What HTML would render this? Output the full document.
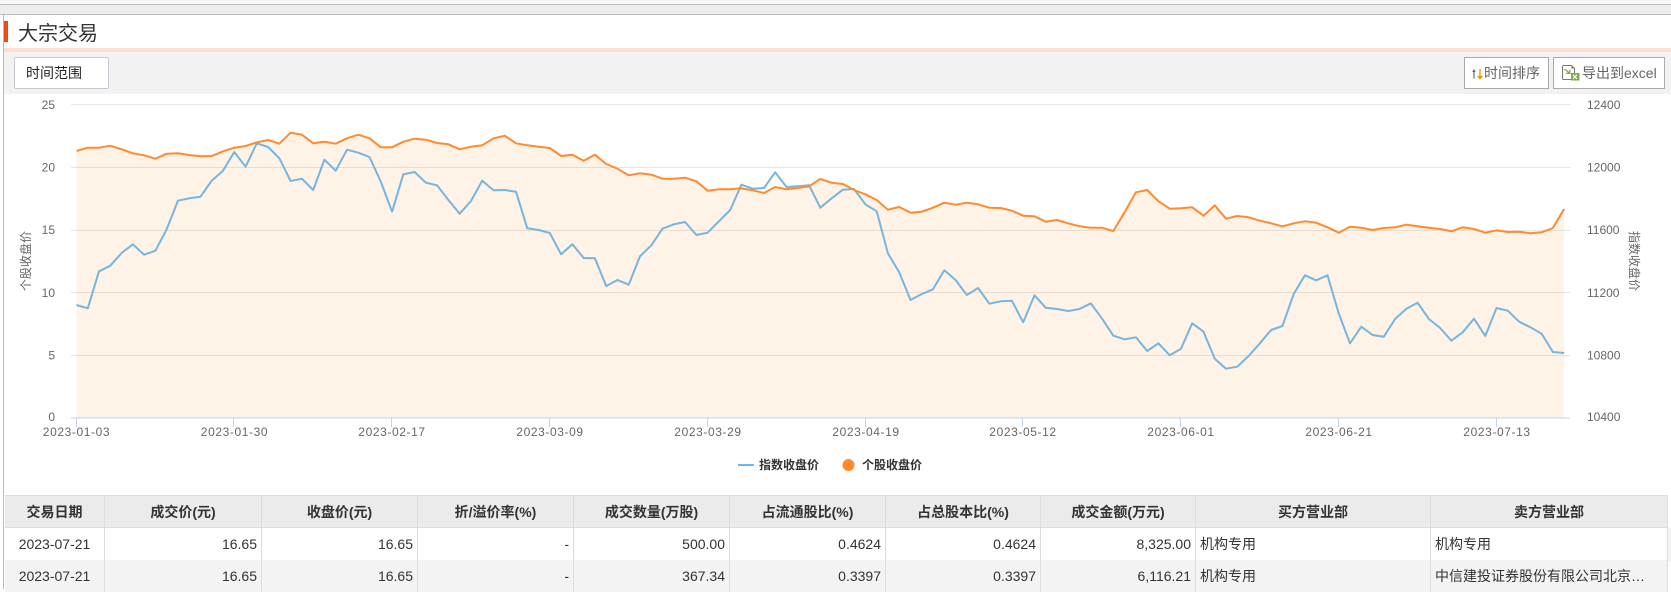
<!DOCTYPE html>
<html lang="zh">
<head>
<meta charset="utf-8">
<title>大宗交易</title>
<style>
*{box-sizing:border-box}
html,body{margin:0;padding:0;background:#fff}
body{position:relative;width:1671px;height:589px;overflow:hidden;font-family:"Liberation Sans","Noto Sans CJK SC",sans-serif;font-size:14px;color:#333}
.a{position:absolute}
.btn{position:absolute;top:57px;height:32px;background:#fff;border:1px solid #aaa;color:#666;line-height:30px;font-size:14px;white-space:nowrap}
table{position:absolute;left:5px;top:495px;border-collapse:separate;border-spacing:0;table-layout:fixed;width:1663px}
th,td{border-right:1px solid #ddd;padding:0 4px;font-size:14px;white-space:nowrap;overflow:hidden}
th{height:33px;background:#ebebeb;border-top:1px solid #ddd;border-bottom:1px solid #ddd;color:#333;font-weight:bold;text-align:center}
td{height:32px;color:#333;text-align:right}
td.c{text-align:center}
td.l{text-align:left}
tr.z td{background:#f3f3f3}
</style>
</head>
<body>
<div class="a" style="left:0;top:0;width:1671px;height:4px;background:#f6f6f6"></div>
<div class="a" style="left:0;top:4px;width:1671px;height:11px;background:#eceeee;border-top:1px solid #bbb;border-bottom:1px solid #bbb"></div>
<div class="a" style="left:3px;top:14px;width:1px;height:575px;background:#bbb"></div>
<div class="a" style="left:4px;top:21px;width:4px;height:21px;background:#f04a0f"></div>
<div class="a" style="left:18px;top:17px;font-size:20px;line-height:30px;color:#333;font-family:'Noto Sans CJK SC',sans-serif">大宗交易</div>
<div class="a" style="left:4px;top:48px;width:1667px;height:4px;background:#fde0cf"></div>
<div class="a" style="left:4px;top:52px;width:1667px;height:42px;background:#f2f2f2"></div>
<div class="a" style="left:14px;top:57px;width:95px;height:32px;background:#fff;border:1px solid #c5c8d0;border-radius:2px;color:#222;line-height:30px;padding-left:11px">时间范围</div>
<div class="btn" style="left:1464px;width:85px;padding-left:19px">时间排序
<svg class="a" style="left:7px;top:10px" width="12" height="12" viewBox="0 0 12 12"><path d="M2 10.500V3" fill="none" stroke="#666" stroke-width="1.200"/><path d="M2 1L.2 4h3.600z" fill="#666"/><path d="M8 1v8" fill="none" stroke="#f28a00" stroke-width="1.300"/><path d="M8 11.500L5 8h6z" fill="#f28a00"/></svg>
</div>
<div class="btn" style="left:1553px;width:112px;padding-left:28px">导出到excel
<svg class="a" style="left:8px;top:7px" width="18" height="16" viewBox="0 0 18 16"><path d="M9.500.5H1.500a1 1 0 0 0-1 1v12a1 1 0 0 0 1 1h8M9.500.5l3 3V8" fill="none" stroke="#777" stroke-width="1"/><path d="M9.500.5v3h3z" fill="#777"/><path d="M2.500 4l5 4M7.800 4.800v3.500H4.300" fill="none" stroke="#7cad4a" stroke-width="1.300"/><rect x="9" y="8" width="8.500" height="7.500" fill="#7cad4a"/><path d="M11 9.800l4 4M15 9.800l-4 4" stroke="#fff" stroke-width="1.200"/></svg>
</div>

<svg class="a" style="left:0;top:94px;font-family:'Liberation Sans','Noto Sans CJK SC',sans-serif" width="1671" height="400" viewBox="0 94 1671 400">
<g stroke="#e6e6e6" stroke-width="1">
<path d="M71 104.500H1570M71 167.500H1570M71 230.500H1570M71 292.500H1570M71 355.500H1570"/>
</g>
<polygon fill="#ff8b2e" fill-opacity=".115" points="76.5,418 76.5,151 87.8,147.7 99,147.7 110.3,145.7 121.6,149.3 132.9,153.3 144.1,155.3 155.4,158.7 166.7,153.7 177.9,153.3 189.2,155 200.5,156.3 211.7,156 223,151.3 234.3,147.7 245.6,146 256.8,142.3 268.1,140 279.4,143.7 290.6,132.7 301.9,134.7 313.2,143.3 324.4,141.7 335.7,143.7 347,138.3 358.3,134.7 369.5,138.3 380.8,147.3 392.1,147.3 403.3,141.7 414.6,138.7 425.9,139.7 437.1,143 448.4,144.3 459.7,149.3 471,146.7 482.2,145.3 493.5,138.3 504.8,135.7 516,143.3 527.3,145.3 538.6,146.7 549.8,148 561.1,156 572.4,154.7 583.7,160.7 594.9,154.7 606.2,164 617.5,168.7 628.7,175.3 640,173.3 651.3,174.7 662.5,178.7 673.8,178.7 685.1,177.7 696.4,181.3 707.6,190.7 718.9,189.3 730.2,189.3 741.4,188.3 752.7,190.3 764,193 775.2,187 786.5,189.3 797.8,188 809.1,186.3 820.3,179 831.6,182.7 842.9,184 854.1,190 865.4,194.3 876.7,200 887.9,209.7 899.2,207 910.5,212.7 921.8,211.7 933,207.7 944.3,202.7 955.6,204.7 966.8,202.7 978.1,204.3 989.4,207.7 1000.6,208 1011.9,210.7 1023.2,215.7 1034.5,216.3 1045.7,221.7 1057,220 1068.3,223.3 1079.5,226.3 1090.8,227.7 1102.1,227.7 1113.3,231 1124.6,212.3 1135.9,192.3 1147.2,190 1158.4,201.3 1169.7,208.7 1181,208.3 1192.2,207.3 1203.5,215.7 1214.8,205.3 1226,218.7 1237.3,216 1248.6,217.3 1259.9,220.7 1271.1,223.3 1282.4,226.3 1293.7,223.3 1304.9,221.3 1316.2,222.7 1327.5,227.3 1338.7,232.7 1350,226.7 1361.3,227.7 1372.6,230 1383.8,228 1395.1,227.3 1406.4,224.7 1417.6,226.3 1428.9,227.7 1440.2,229 1451.4,231.3 1462.7,227.3 1474,229 1485.3,232.7 1496.5,230.3 1507.8,232 1519.1,231.7 1530.3,233.3 1541.6,232.3 1552.9,228 1564.1,209 1564.1,418"/>
<polyline fill="none" stroke="#77b5dd" stroke-width="2" stroke-linejoin="round" points="76.5,305 87.8,308.3 99,271.3 110.3,265.7 121.6,253 132.9,244.3 144.1,254.7 155.4,250.7 166.7,229.3 177.9,200.7 189.2,198.3 200.5,196.7 211.7,180.7 223,170.7 234.3,152 245.6,166.7 256.8,143.3 268.1,147 279.4,158.3 290.6,181 301.9,178.7 313.2,190 324.4,159.7 335.7,170.7 347,149.7 358.3,152.7 369.5,157 380.8,181.7 392.1,211.7 403.3,174.3 414.6,172 425.9,182.7 437.1,185.3 448.4,200 459.7,213.7 471,201 482.2,180.7 493.5,190.3 504.8,190 516,191.7 527.3,228.3 538.6,230 549.8,233 561.1,254.3 572.4,244.3 583.7,258 594.9,258.3 606.2,286 617.5,280 628.7,284.7 640,256.3 651.3,245.3 662.5,228.7 673.8,224.3 685.1,222 696.4,235 707.6,232.7 718.9,221.3 730.2,210 741.4,184.7 752.7,188.7 764,188 775.2,172.3 786.5,187 797.8,186.3 809.1,185.3 820.3,207.7 831.6,198.3 842.9,189.7 854.1,189 865.4,204.3 876.7,211.3 887.9,253.3 899.2,272.3 910.5,300 921.8,294 933,289.3 944.3,270.3 955.6,280 966.8,295 978.1,288 989.4,303.7 1000.6,301.3 1011.9,300.7 1023.2,322.3 1034.5,295.3 1045.7,307.7 1057,309 1068.3,311 1079.5,309 1090.8,303.3 1102.1,318.7 1113.3,335.7 1124.6,339.3 1135.9,337.3 1147.2,351 1158.4,343.3 1169.7,355.3 1181,348.7 1192.2,323.3 1203.5,331.7 1214.8,358.7 1226,368.7 1237.3,366.7 1248.6,356 1259.9,343.3 1271.1,330 1282.4,326 1293.7,294 1304.9,275.3 1316.2,280.3 1327.5,275.3 1338.7,313.3 1350,343.3 1361.3,326.7 1372.6,335 1383.8,336.7 1395.1,319 1406.4,308.7 1417.6,302.7 1428.9,319 1440.2,328 1451.4,340.7 1462.7,332.3 1474,318.7 1485.3,336 1496.5,308 1507.8,310.7 1519.1,321.7 1530.3,327.3 1541.6,333.7 1552.9,352 1564.1,353"/>
<polyline fill="none" stroke="#ff8b2e" stroke-width="2" stroke-linejoin="round" points="76.5,151 87.8,147.7 99,147.7 110.3,145.7 121.6,149.3 132.9,153.3 144.1,155.3 155.4,158.7 166.7,153.7 177.9,153.3 189.2,155 200.5,156.3 211.7,156 223,151.3 234.3,147.7 245.6,146 256.8,142.3 268.1,140 279.4,143.7 290.6,132.7 301.9,134.7 313.2,143.3 324.4,141.7 335.7,143.7 347,138.3 358.3,134.7 369.5,138.3 380.8,147.3 392.1,147.3 403.3,141.7 414.6,138.7 425.9,139.7 437.1,143 448.4,144.3 459.7,149.3 471,146.7 482.2,145.3 493.5,138.3 504.8,135.7 516,143.3 527.3,145.3 538.6,146.7 549.8,148 561.1,156 572.4,154.7 583.7,160.7 594.9,154.7 606.2,164 617.5,168.7 628.7,175.3 640,173.3 651.3,174.7 662.5,178.7 673.8,178.7 685.1,177.7 696.4,181.3 707.6,190.7 718.9,189.3 730.2,189.3 741.4,188.3 752.7,190.3 764,193 775.2,187 786.5,189.3 797.8,188 809.1,186.3 820.3,179 831.6,182.7 842.9,184 854.1,190 865.4,194.3 876.7,200 887.9,209.7 899.2,207 910.5,212.7 921.8,211.7 933,207.7 944.3,202.7 955.6,204.7 966.8,202.7 978.1,204.3 989.4,207.7 1000.6,208 1011.9,210.7 1023.2,215.7 1034.5,216.3 1045.7,221.7 1057,220 1068.3,223.3 1079.5,226.3 1090.8,227.7 1102.1,227.7 1113.3,231 1124.6,212.3 1135.9,192.3 1147.2,190 1158.4,201.3 1169.7,208.7 1181,208.3 1192.2,207.3 1203.5,215.7 1214.8,205.3 1226,218.7 1237.3,216 1248.6,217.3 1259.9,220.7 1271.1,223.3 1282.4,226.3 1293.7,223.3 1304.9,221.3 1316.2,222.7 1327.5,227.3 1338.7,232.7 1350,226.7 1361.3,227.7 1372.6,230 1383.8,228 1395.1,227.3 1406.4,224.7 1417.6,226.3 1428.9,227.7 1440.2,229 1451.4,231.3 1462.7,227.3 1474,229 1485.3,232.7 1496.5,230.3 1507.8,232 1519.1,231.7 1530.3,233.3 1541.6,232.3 1552.9,228 1564.1,209"/>
<path d="M71 418H1570" stroke="#c6d3e4" stroke-width="1"/>
<path d="M76.500 418v9M233.500 418v9M391.500 418v9M549.500 418v9M707.500 418v9M865.500 418v9M1022.500 418v9M1180.500 418v9M1338.500 418v9M1496.500 418v9" stroke="#c6d3e4" stroke-width="1"/>
<g font-size="12" fill="#666" text-anchor="end">
<text x="55" y="109">25</text>
<text x="55" y="171.500">20</text>
<text x="55" y="234">15</text>
<text x="55" y="297">10</text>
<text x="55" y="359.500">5</text>
<text x="55" y="421">0</text>
</g>
<g font-size="12" fill="#666">
<text x="1587" y="109">12400</text>
<text x="1587" y="171.500">12000</text>
<text x="1587" y="234">11600</text>
<text x="1587" y="297">11200</text>
<text x="1587" y="359.500">10800</text>
<text x="1587" y="421">10400</text>
</g>
<g font-size="12" fill="#666" text-anchor="middle" letter-spacing=".6">
<text x="76.500" y="436">2023-01-03</text>
<text x="234.500" y="436">2023-01-30</text>
<text x="392" y="436">2023-02-17</text>
<text x="550" y="436">2023-03-09</text>
<text x="708" y="436">2023-03-29</text>
<text x="866" y="436">2023-04-19</text>
<text x="1023" y="436">2023-05-12</text>
<text x="1181" y="436">2023-06-01</text>
<text x="1339" y="436">2023-06-21</text>
<text x="1497" y="436">2023-07-13</text>
</g>
<text transform="translate(30 261) rotate(-90)" font-size="12" fill="#666" text-anchor="middle">个股收盘价</text>
<text transform="translate(1630 261) rotate(90)" font-size="12" fill="#666" text-anchor="middle">指数收盘价</text>
<path d="M738 465H754" stroke="#6cb8ee" stroke-width="2"/>
<text x="759" y="469" font-size="12" fill="#333" font-weight="bold">指数收盘价</text>
<circle cx="848.500" cy="465" r="6" fill="#ff8b2e"/>
<text x="862" y="469" font-size="12" fill="#333" font-weight="bold">个股收盘价</text>
</svg>

<div class="a" style="left:1668px;top:528px;width:3px;height:34px;background:#f3f3f3"></div>
<table>
<colgroup><col style="width:100px"><col style="width:157px"><col style="width:156px"><col style="width:156px"><col style="width:156px"><col style="width:156px"><col style="width:155px"><col style="width:155px"><col style="width:235px"><col style="width:237px"></colgroup>
<tr><th>交易日期</th><th>成交价(元)</th><th>收盘价(元)</th><th>折/溢价率(%)</th><th>成交数量(万股)</th><th>占流通股比(%)</th><th>占总股本比(%)</th><th>成交金额(万元)</th><th>买方营业部</th><th>卖方营业部</th></tr>
<tr><td class="c">2023-07-21</td><td>16.65</td><td>16.65</td><td>-</td><td>500.00</td><td>0.4624</td><td>0.4624</td><td>8,325.00</td><td class="l">机构专用</td><td class="l">机构专用</td></tr>
<tr class="z"><td class="c">2023-07-21</td><td>16.65</td><td>16.65</td><td>-</td><td>367.34</td><td>0.3397</td><td>0.3397</td><td>6,116.21</td><td class="l">机构专用</td><td class="l">中信建投证券股份有限公司北京…</td></tr>
</table>
</body>
</html>
